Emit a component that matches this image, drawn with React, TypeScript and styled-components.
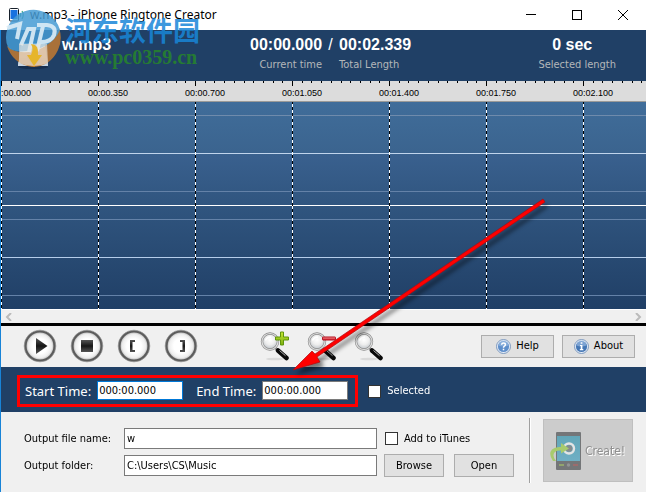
import React, { useState } from "react";
import styled, { createGlobalStyle, css } from "styled-components";

const ui = `"DejaVu Sans Condensed", "DejaVu Sans", sans-serif`;
const arial = `"Liberation Sans", Arial, sans-serif`;
const navy = "#204066";

const GlobalStyle = createGlobalStyle`
  *, *::before, *::after { box-sizing: border-box; }
  body { margin: 0; background: #f0f0f0; }
  button, input { font: inherit; color: inherit; }
`;

const Window = styled.main`
  position: relative;
  min-height: 100vh;
  display: flex;
  flex-direction: column;
  overflow: hidden;
  background: #f0f0f0;
  color: #000;
  font: 11px/16px ${ui};
`;

const TitleBar = styled.header`
  display: flex;
  align-items: center;
  height: 30px;
  padding-left: 9px;
  background: #fff;
`;

const Title = styled.h1`
  flex: 1;
  margin: 0 0 0 4px;
  font: 400 12px/18px "Noto Sans", sans-serif;
  white-space: nowrap;
`;

const CaptionButton = styled.button`
  display: grid;
  place-items: center;
  width: 46px;
  height: 30px;
  padding: 0;
  border: 0;
  background: none;
`;

const Body = styled.div`
  flex: 1;
  display: flex;
  flex-direction: column;
  border-left: 1px solid #1883d7;
`;

const Summary = styled.section`
  display: flex;
  height: 51px;
  padding: 6px 30px 0 16px;
  background: ${navy};
  color: #fff;
`;

const FileInfo = styled.div`
  display: flex;
  width: 233px;
  gap: 13px;
`;

const FileName = styled.h2`
  margin: 0;
  font: 700 16px/18px ${arial};
`;

const Stat = styled.div<{ $align: "left" | "right" | "center" }>`
  display: flex;
  flex-direction: column;
  gap: 2px;
  text-align: ${(p) => p.$align};
`;

const StatValue = styled.strong<{ $inset?: boolean }>`
  font: 700 16px/18px ${arial};
  ${(p) => p.$inset && css`padding-right: 10px;`}
`;

const StatLabel = styled.span`
  color: #b4b7b9;
  font: 11px/18px ${ui};
`;

const Slash = styled.span`
  width: 17px;
  text-align: center;
  font: 16px/18px ${arial};
`;

const Spacer = styled.div`
  flex: 1;
`;

const Ruler = styled.div`
  height: 21px;
  overflow: hidden;
  background: #dcdcdc;
  border-bottom: 1px solid #9a9a98;
`;

const Drawing = styled.svg<{ $height: number }>`
  display: block;
  width: 100%;
  height: ${(p) => p.$height}px;
`;

const RulerLabels = styled.ol`
  display: flex;
  margin: 0 0 0 -10px;
  padding: 0;
  list-style: none;
  font: 9px/12px ${arial};
`;

const RulerLabel = styled.li`
  flex: 0 0 97px;
`;

const ScrollTrack = styled.div`
  display: flex;
  justify-content: space-between;
  align-items: center;
  height: 17px;
  padding: 0 4px;
  border-top: 1px solid #fff;
  border-bottom: 3px solid #000;
`;

const ScrollButton = styled.button`
  display: grid;
  padding: 0;
  border: 0;
  background: none;
`;

const Toolbar = styled.div`
  display: flex;
  align-items: center;
  height: 41px;
  padding: 0 11px 1px 22px;
`;

const ToolGroup = styled.div<{ $gap: number; $before?: number }>`
  display: flex;
  gap: ${(p) => p.$gap}px;
  margin-left: ${(p) => p.$before ?? 0}px;
`;

const IconButton = styled.button`
  display: grid;
  padding: 0;
  border: 0;
  background: none;
`;

const PushButton = styled.button<{ $width: number }>`
  display: flex;
  align-items: center;
  justify-content: center;
  gap: 5px;
  width: ${(p) => p.$width}px;
  height: 23px;
  padding: 0;
  border: 1px solid #adadad;
  background: #e1e1e1;
`;

const TimeBar = styled.div`
  display: flex;
  align-items: center;
  height: 45px;
  padding: 3px 16px 0;
  gap: 10px;
  background: ${navy};
  color: #fff;
`;

const RangeFrame = styled.div`
  display: flex;
  align-items: center;
  height: 32px;
  padding: 0 7px 1px 5px;
  gap: 13px;
  border: 3px solid #f00;
`;

const TimeLabel = styled.label`
  display: flex;
  align-items: center;
  gap: 6px;
  font: 13px/18px "Noto Sans", sans-serif;
  white-space: nowrap;
`;

const TimeInput = styled.input<{ $active?: boolean }>`
  width: 86px;
  height: 19px;
  padding: 0 1px;
  border: 1px solid ${(p) => (p.$active ? "#0078d7" : "#7a7a7a")};
  border-radius: 0;
  outline: 0;
  background: #fff;
  color: #000;
  font: 11px/16px ${ui};
`;

const CheckLabel = styled.label`
  display: flex;
  align-items: center;
  gap: 6px;
  white-space: nowrap;
`;

const CheckBox = styled.input`
  appearance: none;
  width: 13px;
  height: 13px;
  margin: 0;
  border: 1px solid #333;
  background: #fff;
  &:checked { box-shadow: inset 0 0 0 2px #fff; background: #333; }
`;

const Output = styled.section`
  display: flex;
  padding: 6px 13px 9px 23px;
`;

const OutputForm = styled.form`
  flex: 1;
  display: grid;
  grid-template-columns: 100px minmax(0, 1fr) 137px;
  grid-auto-rows: 23px;
  row-gap: 4px;
  align-items: center;
  padding: 9px 15px 0 0;
`;

const TextInput = styled.input`
  width: 100%;
  height: 21px;
  padding: 0 2px;
  border: 1px solid #7a7a7a;
  border-radius: 0;
  background: #fff;
`;

const FormActions = styled.div`
  display: flex;
  justify-content: flex-end;
  gap: 10px;
`;

const Option = styled.div`
  padding-left: 8px;
`;

const CreatePanel = styled.div`
  padding: 1px 0 1px 13px;
  border-left: 1px solid #a0a0a0;
  box-shadow: inset 1px 0 #fff;
`;

const CreateButton = styled.button`
  display: flex;
  align-items: center;
  gap: 4px;
  width: 90px;
  height: 63px;
  padding: 0 5px;
  border: 1px solid #bfbfbf;
  background: #ccc;
  color: #909090;
  font: 12px/18px ${ui};
  text-shadow: 1px 1px #fff;
  svg { flex-shrink: 0; }
`;

const Watermark = styled.div`
  position: absolute;
  top: 8px;
  left: 5px;
  display: flex;
  gap: 3px;
  pointer-events: none;
`;

const WatermarkText = styled.div`
  display: flex;
  flex-direction: column;
  padding-top: 6px;
  white-space: nowrap;
`;

const SiteName = styled.span`
  color: rgba(24, 134, 216, 0.85);
  font: 700 27px/31px "Noto Sans CJK SC", sans-serif;
`;

const SiteAddress = styled.span`
  color: rgba(38, 132, 44, 0.88);
  font: 700 20px/24px "Liberation Serif", serif;
`;

const ArrowLayer = styled.svg`
  position: absolute;
  top: 190px;
  left: 280px;
  pointer-events: none;
`;

const times = ["00:00.000", "00:00.350", "00:00.700", "00:01.050", "00:01.400", "00:01.750", "00:02.100"];
const step = 97;

const RulerTicks = () => (
  <Drawing $height={6} aria-hidden="true">
    {Array.from({ length: 70 }, (_, i) => (
      <rect key={i} x={Math.round((i * step) / 10)} width="1" height={i % 10 ? 2 : 5} />
    ))}
  </Drawing>
);

const levels: [number, string][] = [
  [13, "#6f8bac"], [51, "#c0d4ec"], [89, "#6482a8"], [103, "#fff"],
  [117, "#6482a8"], [155, "#b6cdea"], [193, "#6482a8"],
];

const Waveform = () => (
  <Drawing $height={207} role="img" aria-label="Waveform">
    <defs>
      <linearGradient id="wave" x2="0" y2="1">
        <stop stopColor="#406d9a" />
        <stop offset=".24" stopColor="#3b648f" />
        <stop offset=".26" stopColor="#39608e" />
        <stop offset=".5" stopColor="#30557f" />
        <stop offset="1" stopColor="#203f66" />
      </linearGradient>
    </defs>
    <rect width="100%" height="207" fill="url(#wave)" />
    {levels.map(([y, color]) => <rect key={y} y={y} width="100%" height="1" fill={color} />)}
    {times.map((t, i) => (
      <g key={t}>
        <rect x={i * step} width="1" height="207" />
        <path d={`M${i * step + 0.5} 2V207`} stroke="#fff" strokeDasharray="3 3" />
      </g>
    ))}
  </Drawing>
);

const RoundIcon = ({ kind }: { kind: string }) => (
  <svg width="34" height="34" viewBox="0 0 34 34" aria-hidden="true">
    <defs>
      <radialGradient id={`face-${kind}`}>
        <stop offset=".5" stopColor="#fff" /><stop offset=".8" stopColor="#eee" /><stop offset="1" stopColor="#aaa" />
      </radialGradient>
      <linearGradient id={`glyph-${kind}`} x2="0" y2="1">
        <stop stopColor="#555" /><stop offset=".5" stopColor="#161616" /><stop offset="1" stopColor="#555" />
      </linearGradient>
    </defs>
    <circle cx="17" cy="17" r="14.6" fill={`url(#face-${kind})`} stroke="#5c5c5c" strokeWidth="2.4" />
    <circle cx="17" cy="17" r="15.9" fill="none" stroke="#999" strokeWidth=".6" />
    <g fill={`url(#glyph-${kind})`}>
      {kind === "play" && <path d="M13 9L24.500 17L13 25Z" />}
      {kind === "stop" && <rect x="11" y="11" width="12" height="12" />}
      {kind === "start" && <path d="M13 11h5v2h-2.500v8H18v2h-5Z" />}
      {kind === "end" && <path d="M21 11h-5v2h2.500v8H16v2h5Z" />}
    </g>
  </svg>
);

const ZoomIcon = ({ kind }: { kind: string }) => (
  <svg width="30" height="30" viewBox="0 0 30 30" aria-hidden="true">
    <defs>
      <radialGradient id={`lens-${kind}`} cx=".5" cy=".4">
        <stop stopColor="#fff" /><stop offset=".6" stopColor="#eee" /><stop offset="1" stopColor="#ccd0d4" />
      </radialGradient>
      <linearGradient id="leaf" x2="0" y2="1"><stop stopColor="#c5e735" /><stop offset="1" stopColor="#7caf10" /></linearGradient>
      <linearGradient id="ruby" x2="0" y2="1"><stop stopColor="#f69494" /><stop offset="1" stopColor="#d21828" /></linearGradient>
    </defs>
    <ellipse cx="15" cy="28" rx="9" ry="1.300" fill="#ccc" opacity=".6" />
    <path d="M15.500 17L19 20.500" stroke="#999" strokeWidth="2.500" />
    <path d="M18 19.500L26.500 27" stroke="#090909" strokeWidth="4.500" strokeLinecap="round" />
    <path d="M19.500 19.500L25.500 24.700" stroke="#ddd" strokeWidth=".8" />
    <circle cx="10" cy="10.500" r="8" fill={`url(#lens-${kind})`} stroke="#8a8a8a" strokeWidth="2.400" />
    <circle cx="10" cy="10.500" r="8" fill="none" stroke="#dedede" strokeWidth="1.200" />
    <path d="M5.500 9.500Q7 6 11 6" fill="none" stroke="#fff" strokeWidth="1.500" />
    {kind === "in" && <path d="M20.500 1h3v5h5v3h-5v5h-3V9h-5V6h5Z" fill="url(#leaf)" stroke="#5f950b" />}
    {kind === "out" && <rect x="15.500" y="6" width="13" height="3" rx=".5" fill="url(#ruby)" stroke="#b3101e" />}
  </svg>
);

const BadgeIcon = ({ kind }: { kind: "help" | "about" }) => (
  <svg width="15" height="15" viewBox="0 0 15 15" aria-hidden="true">
    <circle cx="7.500" cy="7.500" r="7" fill="#e8eef7" stroke="#7291ba" strokeWidth=".9" />
    <circle cx="7.500" cy="7.500" r="5.600" fill={kind === "help" ? "#5f8fcb" : "#4577b5"} />
    <path d="M2.500 6.500a5 5 0 0 1 10 0Q7 8.500 2.500 6.500" fill="#9bbbe2" opacity=".65" />
    {kind === "help" ? (
      <g fill="none" stroke="#fff" strokeWidth="1.500"><path d="M5.600 5.700C5.700 3.500 9.400 3.500 9.400 5.700C9.400 7 7.500 7 7.500 8.700" /><path d="M7.500 9.700v1.600" /></g>
    ) : (
      <path d="M6.700 3.300h1.700v1.500H6.700ZM6 6h2.400v4h.9v1.200H5.800V10h.9V7.100H6Z" fill="#fff" />
    )}
  </svg>
);

const PhoneIcon = () => (
  <svg width="32" height="42" viewBox="0 0 32 42" aria-hidden="true">
    <defs>
      <linearGradient id="screen" x2="0" y2="1"><stop stopColor="#62a6b8" /><stop offset="1" stopColor="#6fafc4" /></linearGradient>
    </defs>
    <rect x="7" y="2" width="25" height="38" rx="1" fill="#747678" />
    <rect x="8" y="6" width="23" height="25" fill="url(#screen)" />
    <path d="M10 35h5" stroke="#9bb46b" strokeWidth="1.500" />
    <path d="M24 35h5" stroke="#a86a6a" strokeWidth="1.500" />
    <circle cx="19.500" cy="35" r="1.700" fill="#929496" />
    <circle cx="20" cy="18.500" r="5" fill="none" stroke="#e4e4e4" strokeWidth="2.400" />
    <circle cx="20" cy="18.500" r="3.300" fill="#858b8e" />
    <path d="M4 31Q-1 24 3 19.500Q6 16.500 12 17V13L20 18.500L12 23.500V20.500Q5 20 4.500 25Q4.300 28 7 31Z" fill="#a8cb6d" />
  </svg>
);

const FileIcon = () => (
  <svg width="32" height="34" viewBox="0 0 32 34" aria-hidden="true">
    <ellipse cx="16" cy="31" rx="15" ry="2" fill="#172f50" />
    <path d="M4 7H28L31 30H1Z" fill="#e6e5e1" />
    <path d="M2 22H30L31 30H1Z" fill="#c7d5e3" />
    <path d="M13 9Q21 7 20 20H24L17 31L10 20H14Q16 14 13 9Z" fill="#edbd28" stroke="#c89325" />
  </svg>
);

const AppIcon = () => (
  <svg width="17" height="14" viewBox="0 0 17 14" aria-hidden="true">
    <rect x=".5" y=".5" width="9" height="12.500" rx="1" fill="#fff" stroke="#17202b" />
    <rect x="1.500" y="2" width="7" height="9" fill="#1972df" />
    <path d="M11 5Q12.500 7 11 9M13 3Q15.500 7 13 11" fill="none" stroke="#39a878" strokeWidth="1.200" />
  </svg>
);

const WatermarkLogo = () => (
  <svg width="57" height="60" viewBox="0 0 57 60" aria-hidden="true">
    <path d="M2 38Q8 56 27 59Q45 59 53 42Q58 31 54 20Q46 39 29 43Q12 47 2 38Z" fill="#c27a31" opacity=".85" />
    <path d="M1 30A27.500 27.500 0 0 1 55 22Q48 38 28 42Q9 46 3 39Q1 35 1 30Z" fill="#459bd3" opacity=".85" />
    <g fill="none" stroke="#dcedf7" strokeWidth="4" opacity=".9">
      <path d="M2 20L15 16L12 31" />
      <path d="M16 37L23 21H29L24 44" />
      <path d="M32 17H42Q52 18 49 27Q46 35 33 34" />
      <path d="M38 18L32 43" />
    </g>
    <path d="M14 36H42L43 55Q29 61 14 55Z" fill="#e9e5dd" opacity=".65" />
    <path d="M26 36Q34 36 33 47H37L29 58L22 47H26Q29 41 26 36Z" fill="#e6b52b" />
  </svg>
);

export default function App() {
  const [start, setStart] = useState("000:00.000");
  const [end, setEnd] = useState("000:00.000");
  return (
    <>
      <GlobalStyle />
      <Window>
        <TitleBar>
          <AppIcon />
          <Title>w.mp3 - iPhone Ringtone Creator</Title>
          <CaptionButton aria-label="Minimize"><svg width="10" height="10"><path d="M0 4.500H10" stroke="#000" /></svg></CaptionButton>
          <CaptionButton aria-label="Maximize"><svg width="10" height="10"><rect x=".5" y=".5" width="9" height="9" fill="none" stroke="#000" /></svg></CaptionButton>
          <CaptionButton aria-label="Close"><svg width="10" height="10"><path d="M0 0L10 10M10 0L0 10" stroke="#000" /></svg></CaptionButton>
        </TitleBar>
        <Body>
          <Summary>
            <FileInfo><FileIcon /><FileName>w.mp3</FileName></FileInfo>
            <Stat $align="right"><StatValue>00:00.000</StatValue><StatLabel>Current time</StatLabel></Stat>
            <Slash>/</Slash>
            <Stat $align="left"><StatValue>00:02.339</StatValue><StatLabel>Total Length</StatLabel></Stat>
            <Spacer />
            <Stat $align="center"><StatValue $inset>0 sec</StatValue><StatLabel>Selected length</StatLabel></Stat>
          </Summary>
          <Ruler>
            <RulerTicks />
            <RulerLabels>{times.map((t) => <RulerLabel key={t}>{t}</RulerLabel>)}</RulerLabels>
          </Ruler>
          <Waveform />
          <ScrollTrack>
            <ScrollButton aria-label="Scroll left"><svg width="8" height="8"><path d="M6 0L2 4L6 8" fill="none" stroke="#bbb" strokeWidth="2" /></svg></ScrollButton>
            <ScrollButton aria-label="Scroll right"><svg width="8" height="8"><path d="M2 0L6 4L2 8" fill="none" stroke="#bbb" strokeWidth="2" /></svg></ScrollButton>
          </ScrollTrack>
          <Toolbar>
            <ToolGroup $gap={13}>
              <IconButton aria-label="Play"><RoundIcon kind="play" /></IconButton>
              <IconButton aria-label="Stop"><RoundIcon kind="stop" /></IconButton>
              <IconButton aria-label="Set start"><RoundIcon kind="start" /></IconButton>
              <IconButton aria-label="Set end"><RoundIcon kind="end" /></IconButton>
            </ToolGroup>
            <ToolGroup $gap={17} $before={62}>
              <IconButton aria-label="Zoom in"><ZoomIcon kind="in" /></IconButton>
              <IconButton aria-label="Zoom out"><ZoomIcon kind="out" /></IconButton>
              <IconButton aria-label="Zoom to fit"><ZoomIcon kind="fit" /></IconButton>
            </ToolGroup>
            <Spacer />
            <ToolGroup $gap={8}>
              <PushButton $width={73}><BadgeIcon kind="help" />Help</PushButton>
              <PushButton $width={73}><BadgeIcon kind="about" />About</PushButton>
            </ToolGroup>
          </Toolbar>
          <TimeBar>
            <RangeFrame>
              <TimeLabel>Start Time:<TimeInput $active autoFocus value={start} onChange={(e) => setStart(e.target.value)} /></TimeLabel>
              <TimeLabel>End Time:<TimeInput value={end} onChange={(e) => setEnd(e.target.value)} /></TimeLabel>
            </RangeFrame>
            <CheckLabel><CheckBox type="checkbox" />Selected</CheckLabel>
          </TimeBar>
          <Output>
            <OutputForm onSubmit={(e) => e.preventDefault()}>
              <label htmlFor="file-name">Output file name:</label>
              <TextInput id="file-name" defaultValue="w" />
              <Option><CheckLabel><CheckBox type="checkbox" />Add to iTunes</CheckLabel></Option>
              <label htmlFor="folder">Output folder:</label>
              <TextInput id="folder" defaultValue="C:\Users\CS\Music" />
              <FormActions>
                <PushButton type="button" $width={60}>Browse</PushButton>
                <PushButton type="button" $width={60}>Open</PushButton>
              </FormActions>
            </OutputForm>
            <CreatePanel><CreateButton disabled><PhoneIcon />Create!</CreateButton></CreatePanel>
          </Output>
        </Body>
        <Watermark>
          <WatermarkLogo />
          <WatermarkText><SiteName>河东软件园</SiteName><SiteAddress>www.pc0359.cn</SiteAddress></WatermarkText>
        </Watermark>
        <ArrowLayer width="280" height="190" viewBox="280 190 280 190" aria-hidden="true">
          <defs><filter id="soft"><feGaussianBlur stdDeviation="2" /></filter></defs>
          <path d="M543 199L545 202L318 356L321 362L293 370L312 351L315 354Z" transform="translate(3 5)" opacity=".5" filter="url(#soft)" />
          <path d="M543 199L545 202L317 357L320 362L293 370L312 351L315 354Z" fill="#f00" stroke="#a80d13" strokeWidth=".7" />
        </ArrowLayer>
      </Window>
    </>
  );
}
